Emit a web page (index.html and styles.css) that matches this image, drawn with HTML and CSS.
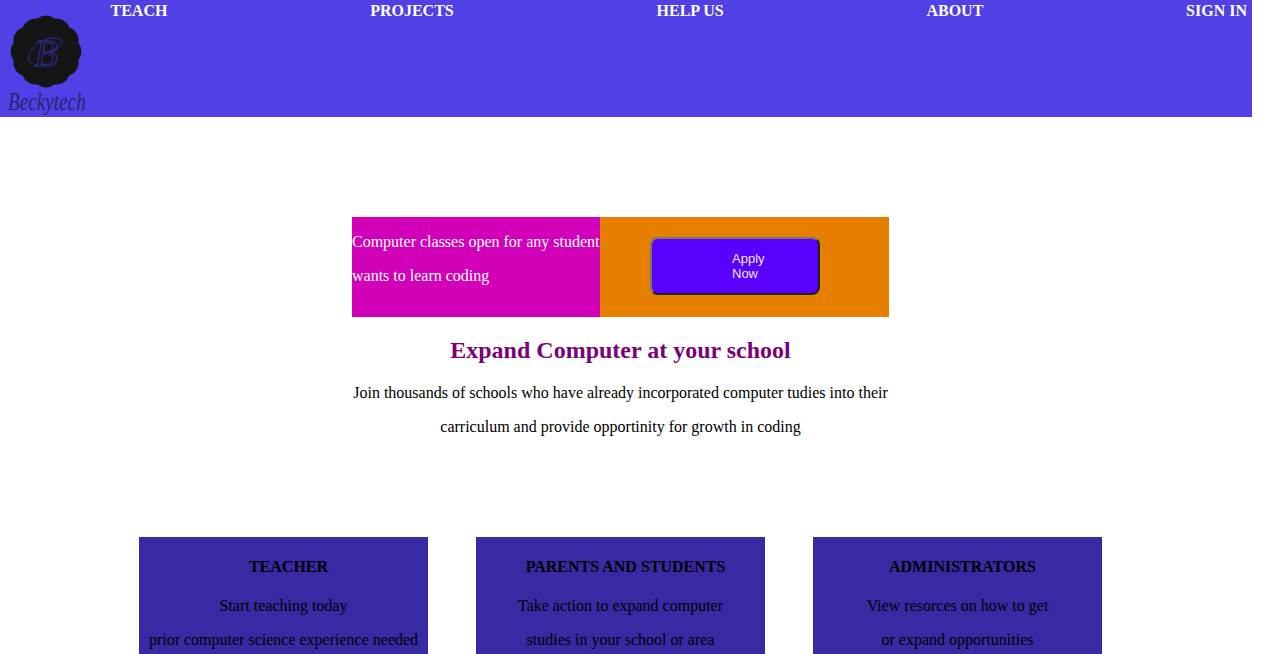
FILE: index.html
```html
<!DOCTYPE html>
<html lang="en">
<head>
<meta charset="utf-8">
<title>Beckytech</title>
<link rel="stylesheet" href="styles.css">
</head>
<body>
<header class="site-header">
  <svg class="logo" width="90" height="117" viewBox="0 0 90 117" role="img" aria-label="Beckytech logo">
    <path class="logo-badge" transform="translate(46 51.5)" d="M8.5 -33A14 14 0 0 1 23.3 -24A14 14 0 0 1 32.5 -8.5A14 14 0 0 1 32.5 8.5A14 14 0 0 1 23.3 24A14 14 0 0 1 8.5 33A14 14 0 0 1 -8.5 33A14 14 0 0 1 -23.3 24A14 14 0 0 1 -32.5 8.5A14 14 0 0 1 -32.5 -8.5A14 14 0 0 1 -23.3 -24A14 14 0 0 1 -8.5 -33A14 14 0 0 1 8.5 -33Z"/>
    <path class="logo-swash" d="M33 64C25 62 29 50 38 43C47 37 60 36 62 41C63 46 55 50 48 52"/>
    <text class="logo-mark" x="46" y="66" text-anchor="middle">B</text>
    <text class="logo-name" transform="translate(8 110) scale(1.01 1.3)">Beckytech</text>
  </svg>
  <nav class="site-nav">
    <a href="#">TEACH</a>
    <a href="#">PROJECTS</a>
    <a href="#">HELP US</a>
    <a href="#">ABOUT</a>
    <a href="#">SIGN IN</a>
  </nav>
</header>
<main class="page">
  <section class="intro">
    <div class="promo">
      <p class="promo-text">Computer classes open for any student wants to learn coding</p>
      <div class="promo-action"><button class="apply" type="button">Apply Now</button></div>
    </div>
    <h2 class="intro-title">Expand Computer at your school</h2>
    <p class="intro-text">Join thousands of schools who have already incorporated computer tudies into their carriculum and provide opportinity for growth in coding</p>
  </section>
  <section class="cards">
    <article class="card">
      <h3>TEACHER</h3>
      <p>Start teaching today</p>
      <p>prior computer science experience needed</p>
    </article>
    <article class="card">
      <h3>PARENTS AND STUDENTS</h3>
      <p>Take action to expand computer</p>
      <p>studies in your school or area</p>
    </article>
    <article class="card">
      <h3>ADMINISTRATORS</h3>
      <p>View resorces on how to get</p>
      <p>or expand opportunities</p>
    </article>
  </section>
</main>
</body>
</html>
```
FILE: styles.css
```css
html, body {
  margin: 0;
  padding: 0;
  overflow: hidden;
  height: 654px;
}
body {
  font-family: "Liberation Serif", "Times New Roman", serif;
  font-size: 16px;
  color: #000;
  background: #fff;
}
.site-header {
  display: flex;
  width: 1252px;
  height: 117px;
  background: #5140e5;
}
.logo {
  flex: none;
  display: block;
}
.logo-badge {
  fill: #151515;
}
.logo-swash {
  fill: none;
  stroke: #2f2f9c;
  stroke-width: 1;
}
.logo-mark {
  font-family: "Liberation Serif", serif;
  font-style: italic;
  font-size: 38px;
  fill: none;
  stroke: #2f2f9c;
  stroke-width: 1;
}
.logo-name {
  font-family: "Liberation Serif", serif;
  font-style: italic;
  font-size: 19px;
  fill: #27246c;
}
.site-nav {
  flex: 1;
  display: flex;
  justify-content: space-between;
  align-items: flex-start;
  padding: 2px 5px 0 20.5px;
}
.site-nav a {
  color: #fff;
  font-weight: bold;
  text-decoration: none;
  line-height: 18px;
}
.page {
  width: 1241px;
  display: flex;
  flex-direction: column;
  align-items: center;
}
.intro {
  width: 537px;
  margin-top: 100px;
  text-align: center;
}
.promo {
  display: flex;
  height: 100px;
  text-align: left;
}
.promo-text {
  flex: none;
  width: 248px;
  margin: 0;
  padding-top: 8px;
  box-sizing: border-box;
  background: #d200b8;
  color: #fff;
  line-height: 34px;
}
.promo-action {
  flex: 1;
  display: flex;
  align-items: center;
  padding: 0 0 2px 50px;
  background: #e67e00;
}
.apply {
  width: 170px;
  height: 58px;
  padding: 0 40px 0 80px;
  box-sizing: border-box;
  border: 2px outset #767676;
  border-radius: 8px;
  background: #5a00ff;
  color: #f0e6ff;
  font-family: "Liberation Sans", Arial, sans-serif;
  font-size: 13px;
  text-align: left;
}
.intro-title {
  margin: 16px 0 9px;
  color: #7a0078;
  font-size: 24px;
  line-height: 34px;
}
.intro-text {
  margin: 0;
  line-height: 34px;
}
.cards {
  display: flex;
  gap: 48px;
  margin-top: 93px;
}
.card {
  width: 289px;
  padding: 13px 0 34px;
  background: #372aa3;
  text-align: center;
  line-height: 34px;
}
.card h3 {
  margin: 0 0 5px;
  padding-left: 10px;
  font-size: 16px;
  line-height: 34px;
}
.card p {
  margin: 0;
}
```
